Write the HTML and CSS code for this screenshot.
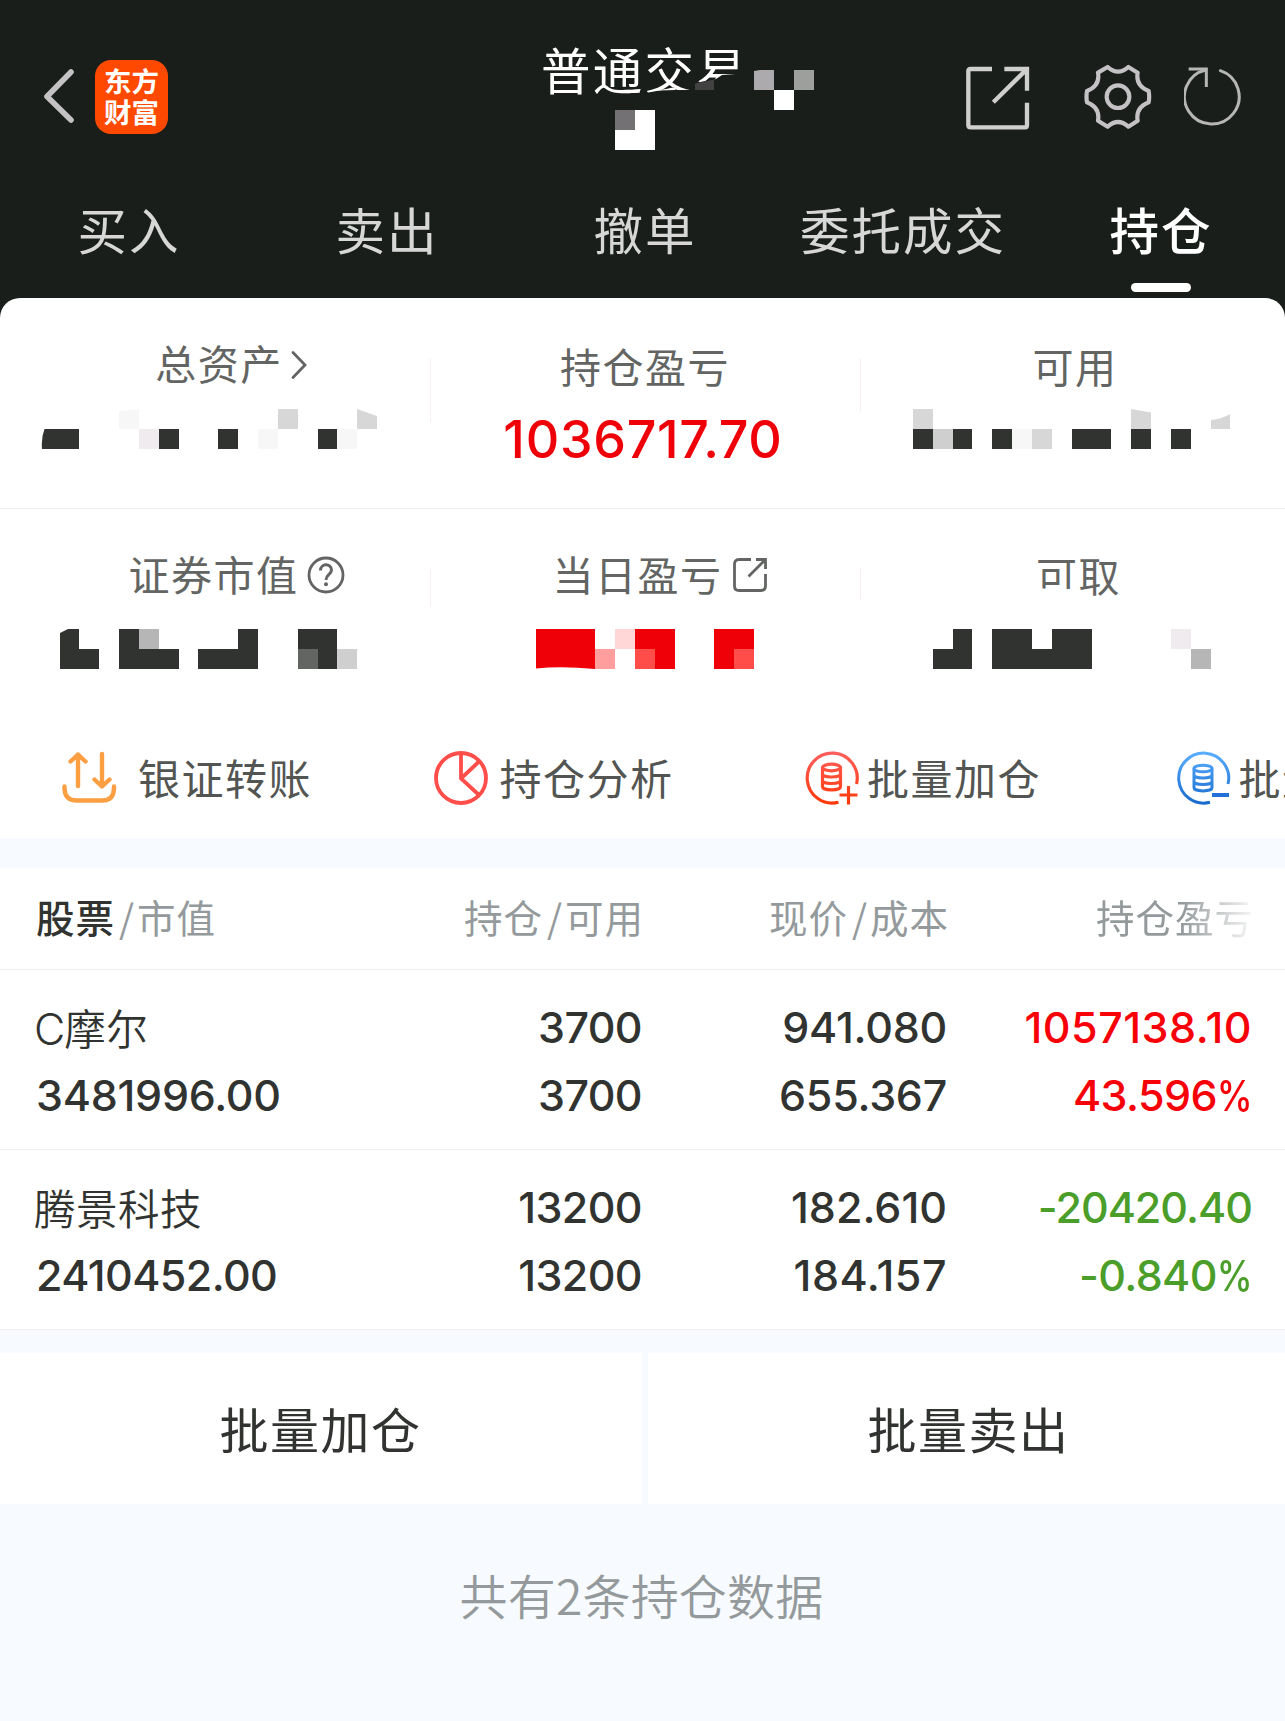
FILE: index.html
```html
<!DOCTYPE html>
<html lang="zh-CN">
<head>
<meta charset="utf-8">
<title>普通交易</title>
<link rel="stylesheet" href="styles.css">
</head>
<body>
<header class="header">
  <div class="topbar">
    <svg class="back" width="32" height="56" viewBox="0 0 32 56"><path d="M28 4 4 28.500 28 52" fill="none" stroke="#c5c2c5" stroke-width="5.600" stroke-linecap="round" stroke-linejoin="round"/></svg>
    <div class="logo">东方<br>财富</div>
    <h1 class="title">普通交易
      <svg class="title-mask" width="280" height="110" viewBox="540 45 280 110">
        <path d="M640 94 662 90 675 87V90H695L700 82 716 79 722 75 742 73.500 760 60V104H640Z" fill="#1a1e1a"/>
        <path d="M695 83.500 714 79.500V90H695Z" fill="#424142"/>
        <path d="M649 91.500Q668 89 679 86L675 90 660 90.500Z" fill="#fff"/>
        <path d="M754 71 760 70H774V90H754Z" fill="#adaaad"/>
        <path d="M794 70h20v20h-20z" fill="#9c9f9c"/>
        <path d="M774 90h20v20h-20zM615 110h40v40h-40z" fill="#fff"/>
        <path d="M615 110h20v20h-20z" fill="#737173"/>
      </svg>
    </h1>
    <div class="tools">
      <svg class="tool-share" width="64" height="64" viewBox="332 109 192 192"><path d="M410 118H346Q339 118 339 125V287Q339 293 346 293H509Q515 293 515 287V219M447 118H515V183M515 118 414 218" fill="none" stroke="#cecfce" stroke-width="13"/></svg>
      <svg class="tool-gear" width="68" height="66" viewBox="686 102 204 198"><g fill="none" stroke="#c5c2c5" stroke-width="12.500" stroke-linejoin="round"><path d="M757 111Q788 139 819 111L847 128Q840 168 880 183Q883 200 880 217Q840 232 847 272L819 290Q788 262 757 290L728 272Q735 232 695 217Q692 200 695 183Q735 168 728 128Z"/><circle cx="788" cy="200" r="34"/></g></svg>
      <svg class="tool-refresh" width="60" height="60" viewBox="982 111 180 180"><g fill="none" stroke="#b5b6b5" stroke-width="9"><path d="M1091 125A82 82 0 1 1 1047 123" stroke-linecap="round"/><path d="M996 120H1049V174"/></g></svg>
    </div>
  </div>
  <nav class="tabs">
    <a class="tab">买入</a><a class="tab">卖出</a><a class="tab">撤单</a><a class="tab">委托成交</a><a class="tab active">持仓</a>
  </nav>
</header>
<main>
  <section class="summary">
    <div class="summary-row">
      <div class="cell">
        <div class="label label-up">总资产<svg class="chev" width="18" height="30" viewBox="0 0 18 30"><path d="M3 2.500 15 15 3 27.500" fill="none" stroke="#636563" stroke-width="2.800" stroke-linecap="round"/></svg></div>
        <svg class="mosaic" width="430" height="40" viewBox="0 409 430 40">
          <path fill="#313330" d="M44.500 429H79V449H42Q41 438 44.500 429ZM159 429h20v20h-20zM218 429h20v20h-20zM318 429h19v20h-19z"/>
          <path fill="#f7f7f7" d="M119 411 139 409.500V429H119ZM258 429h20v20h-20zM337 429h20v20h-20z"/>
          <path fill="#efebef" d="M139 429h20v20h-20z"/>
          <path fill="#d6d7d6" d="M278 409h20v20h-20zM357 409 377 416V429H357Z"/>
        </svg>
      </div>
      <div class="cell rule rule-a">
        <div class="label">持仓盈亏</div>
        <div class="total">1036717.70</div>
      </div>
      <div class="cell rule rule-b">
        <div class="label label-avail">可用</div>
        <svg class="mosaic" width="425" height="40" viewBox="860 409 425 40">
          <path fill="#d6d7d6" d="M913 409h20v20h-20zM1032 429h20v20h-20zM1131 409 1151 412.500V429H1131ZM1211 420Q1222 419 1230 414V429H1211Z"/>
          <path fill="#cecfce" d="M933 429h20v20h-20z"/>
          <path fill="#f7f7f7" d="M1012 429h20v20h-20z"/>
          <path fill="#313330" d="M913 429h20v20h-20zM953 429h19v20h-19zM992 429h20v20h-20zM1072 429h39v20h-39zM1131 429h20v20h-20zM1171 429h20v20h-20z"/>
        </svg>
      </div>
    </div>
    <div class="summary-row second">
      <div class="cell">
        <div class="label">证券市值<svg class="help" width="38" height="38" viewBox="0 0 38 38"><g fill="none" stroke="#636563" stroke-width="2.800"><circle cx="19" cy="19" r="17"/><path d="M13.500 14.500C13.500 7 24.500 7 24.500 14C24.500 18.500 19 18.500 19 24" stroke-width="3"/></g><circle cx="19" cy="28.300" r="2" fill="#636563"/></svg></div>
        <svg class="mosaic" width="430" height="40" viewBox="0 629 430 40">
          <path fill="#313330" d="M60 633 68 629H79V649H99V669H60ZM119 629h20v20h40v20h-60zM198 649h40v-20h20v40h-60zM298 629h39v40h-19v-20h-20z"/>
          <path fill="#b5b6b5" d="M139 629h20v20h-20z"/><path fill="#636563" d="M298 649h20v20h-20z"/><path fill="#cecfce" d="M337 649h20v20h-20z"/>
        </svg>
      </div>
      <div class="cell rule rule-c">
        <div class="label">当日盈亏<svg class="share" width="36" height="36" viewBox="0 0 36 36"><path d="M19 2.500H7Q2.500 2.500 2.500 7V29Q2.500 33.500 7 33.500H29Q33.500 33.500 33.500 29V17M24 2.500H33.500V12M33 3 16.500 19.500" fill="none" stroke="#636563" stroke-width="2.800"/></svg></div>
        <svg class="mosaic" width="430" height="40" viewBox="430 629 430 40">
          <path fill="#ef0008" d="M536 629H595V669Q562 666 536 668.500ZM635 629h40v40h-40zM714 629h40v40h-40z"/>
          <path fill="#ff9e9c" d="M595 649h20v20h-20z"/><path fill="#ffd7d6" d="M615 629h20v20h-20z"/><path fill="#ff4d4a" d="M635 649h20v20h-20zM734 649h20v20h-20z"/>
        </svg>
      </div>
      <div class="cell rule rule-d">
        <div class="label label-draw"><span class="cut">可</span>取</div>
        <svg class="mosaic" width="425" height="40" viewBox="860 629 425 40">
          <path fill="#313330" d="M953 629h19v40h-39v-20h20zM992 629h40v20h20v-20h40v40h-100z"/>
          <path fill="#efebef" d="M1171 629h20v20h-20z"/><path fill="#b5b6b5" d="M1191 649h20v20h-20z"/>
        </svg>
      </div>
    </div>
    <div class="actions">
      <a class="action action-transfer"><svg width="56" height="56" viewBox="61 750 56 56"><path d="M64.500 786.500V788Q64.500 800.500 77 800.500H102Q114 800.500 114 788V786.500M78 786V754.500M70.500 761.500 78 754.500 85.500 761.500M102 754V786M94.500 779.500 102 786.500 109.500 779.500" fill="none" stroke="#fb9f42" stroke-width="4.400" stroke-linecap="round" stroke-linejoin="round"/></svg><span>银证转账</span></a>
      <a class="action action-analysis"><svg width="56" height="56" viewBox="433 750 56 56"><path d="M461 753V778.500L479 795M461 778.500 479 761.500" fill="none" stroke="#ff4d4a" stroke-width="3.800"/><circle cx="461" cy="778" r="25" fill="none" stroke="#ff4d4a" stroke-width="3.800"/></svg><span>持仓分析</span></a>
      <a class="action action-batch"><svg width="56" height="56" viewBox="804.500 750 56 56"><defs><linearGradient id="red" gradientUnits="userSpaceOnUse" x1="0" y1="752" x2="0" y2="804"><stop offset="0" stop-color="#ff5f5c"/><stop offset="1" stop-color="#ff3808"/></linearGradient></defs><g fill="none" stroke="url(#red)" stroke-width="3.200"><path d="M839 802.300A25 25 0 1 1 857 784"/><ellipse cx="832" cy="767.500" rx="9" ry="3.300"/><path d="M823 767.500V786.500C823 791 841 791 841 786.500V767.500M823 774C823 778 841 778 841 774M823 780.500C823 784.500 841 784.500 841 780.500M840 795H858M849 786V804.500"/></g></svg><span>批量加仓</span></a>
      <a class="action action-batch"><svg width="56" height="56" viewBox="805 750 56 56"><defs><linearGradient id="blue" gradientUnits="userSpaceOnUse" x1="0" y1="752" x2="0" y2="804"><stop offset="0" stop-color="#5aaeff"/><stop offset="1" stop-color="#186bce"/></linearGradient></defs><g fill="none" stroke="url(#blue)" stroke-width="3"><path d="M839 802.300A25 25 0 1 1 857 784"/><ellipse cx="832" cy="768.500" rx="9" ry="3.300"/><path d="M823 768.500V787.500C823 792 841 792 841 787.500V768.500M823 775C823 779 841 779 841 775M823 781.500C823 785.500 841 785.500 841 781.500"/></g><path d="M841 793h17v4h-17z" fill="#2171d6"/></svg><span>批量减仓</span></a>
    </div>
  </section>

  <section class="holdings">
    <div class="row head">
      <div><b>股票</b><i>/</i>市值</div>
      <div class="num">持仓<i>/</i>可用</div>
      <div class="num">现价<i>/</i>成本</div>
      <div class="num fade">持仓盈亏</div>
    </div>
    <div class="row stock">
      <div><p class="name"><span class="latin">C</span>摩尔</p><p class="snug">3481996.00</p></div>
      <div class="num tight"><p>3700</p><p>3700</p></div>
      <div class="num snug"><p>941.080</p><p>655.367</p></div>
      <div class="num up"><p class="loose">1057138.10</p><p class="tight">43.596<span class="pct">%</span></p></div>
    </div>
    <div class="row stock">
      <div><p class="name">腾景科技</p><p class="tight">2410452.00</p></div>
      <div class="num tight"><p>13200</p><p>13200</p></div>
      <div class="num"><p>182.610</p><p class="loose">184.157</p></div>
      <div class="num down"><p class="tightest">-20420.40</p><p class="tight">-0.840<span class="pct">%</span></p></div>
    </div>
  </section>

  <section class="batch">
    <a>批量加仓</a><a>批量卖出</a>
  </section>
  <p class="count">共有2条持仓数据</p>
</main>
</body>
</html>
```
FILE: styles.css
```css
* { box-sizing: border-box; }
body {
  margin: 0;
  width: 1285px;
  height: 1721px;
  overflow: hidden;
  background: #f7fbff;
  font-family: "Noto Sans CJK SC", sans-serif;
  color: #313330;
}
p, h1 { margin: 0; }
i { font-style: normal; }
svg { display: block; flex: none; }

.header { height: 318px; background: #1a1e1a; overflow: hidden; }
.topbar { display: flex; align-items: flex-start; height: 190px; }
.back { margin: 68px 0 0 43px; }
.logo {
  width: 73px; height: 74px; margin: 60px 0 0 20px; padding-top: 5px;
  border-radius: 16px; background: #ff4900; color: #fff; text-align: center;
  font-size: 27.500px; font-weight: 700; line-height: 31px;
}
.title {
  position: relative; width: 210px; margin: 34px 0 0 373px;
  color: #fff; font-size: 49.500px; font-weight: 400; line-height: 70px;
  letter-spacing: 2.300px; white-space: nowrap;
}
.title-mask { position: absolute; left: -1px; top: 11px; }
.tools { display: flex; margin-left: 215px; }
.tool-share { margin-top: 66px; }
.tool-gear { margin: 64px 0 0 54px; }
.tool-refresh { margin: 66px 0 0 32px; }

.tabs { display: grid; grid-template-columns: repeat(5, 258px); }
.tab {
  display: flex; flex-direction: column; align-items: center;
  height: 108px; padding-top: 1px; color: #d6d7d6;
  font-size: 49.500px; line-height: 76px; letter-spacing: 2px;
}
.active { color: #fff; font-weight: 500; }
.active::after {
  content: ""; width: 60px; height: 9px; margin: 16px 0 0 0;
  border-radius: 4.500px; background: #fff;
}

.summary {
  height: 540px; margin-top: -20px; overflow: hidden;
  border-radius: 20px 20px 0 0; background: #fff;
}
.summary-row { display: grid; grid-template-columns: 430px 430px 425px; height: 210px; padding-top: 42px; }
.second { border-top: 1px solid #f3eced; }
.cell { position: relative; }
.label {
  display: flex; justify-content: center; align-items: center;
  height: 50px; color: #636563;
  font-size: 41px; line-height: 50px; letter-spacing: 1.500px;
}
.rule::before { content: ""; position: absolute; left: 0; top: 18px; width: 1px; background: #f7eff0; }
.rule-a::before { height: 64px; }
.rule-b::before { height: 54px; }
.rule-c::before { height: 38px; }
.rule-d::before { height: 30px; }
.label-up { height: 44px; padding-left: 33px; }
.label-up + .mosaic { margin-top: 25px; }
.label-up .chev { margin-top: 5px; }
.label-avail { padding-left: 5px; }
.cut { clip-path: inset(0 0 10px 0); }
.chev { margin-left: 7px; }
.help { margin: 4px 0 0 8px; }
.share { margin: 4px 0 0 9px; }
.second .label { margin-top: -3px; }
.second .cell:first-child .label { padding-left: 43px; }
.second .rule-c .label { padding-left: 30px; }
.second .label-draw { padding: 2px 0 0 12px; }
.mosaic { margin-top: 19px; }
.second .mosaic { margin-top: 31px; }
.total {
  margin: 20px 0 0 -4px; text-align: center; color: #ef0008;
  font-family: Inter, sans-serif; font-size: 52px; font-weight: 550; line-height: 60px; letter-spacing: 0.700px;
}

.actions { display: flex; height: 120px; padding: 32px 0 0 61px; }
.action {
  display: flex; flex: none; width: 371.500px; height: 56px;
  color: #525552; font-size: 42px; line-height: 53px; letter-spacing: 1.500px;
}
.action-transfer span { margin-left: 21px; }
.action-analysis span { margin-left: 11px; }
.action-batch span { margin-left: 7px; }

.holdings { margin-top: 30px; background: #fff; }
.row {
  display: grid; grid-template-columns: 301px 305px 305px 305px;
  padding-left: 36px; border-bottom: 1px solid #f1edef;
}
.num { text-align: right; }
.head { height: 102px; padding-top: 21px; color: #949a9c; font-size: 38.500px; font-weight: 400; line-height: 54px; letter-spacing: 1px; }
.head .num { margin-right: -2px; }
.head b { color: #313330; font-weight: 500; }
.head i { margin: 0 2px 0 4px; }
.fade { -webkit-mask-image: linear-gradient(90deg, #000 235px, transparent 312px); mask-image: linear-gradient(90deg, #000 235px, transparent 312px); }
.stock { height: 180px; padding-top: 23px; font-family: Inter, sans-serif; font-size: 43px; font-weight: 550; line-height: 68px; }
.stock p { height: 68px; white-space: nowrap; }
.stock .name { font-family: "Noto Sans CJK SC", sans-serif; font-size: 41.500px; font-weight: 350; margin-left: -2px; letter-spacing: 0.500px; }
.latin { font-family: Inter, sans-serif; font-size: 43px; font-weight: 300; letter-spacing: -1px; }
.loose { letter-spacing: 0.500px; }
.snug { letter-spacing: -0.250px; }
.tight { letter-spacing: -0.600px; }
.tightest { letter-spacing: -1px; }
.pct { display: inline-block; transform: scaleX(0.840); transform-origin: right; margin-left: -7px; }
.up { color: #f70008; }
.down { color: #4a9e29; }

.batch { display: grid; grid-template-columns: 642px 637px; gap: 6px; margin-top: 23px; }
.batch a { height: 151px; padding-top: 37px; background: #fff; text-align: center; font-size: 49px; line-height: 76px; letter-spacing: 1.500px; }
.batch a:first-child { padding-right: 1px; }
.batch a:last-child { padding-left: 4px; }
.count { margin: 55px 2px 0 0; text-align: center; color: #949a9c; font-size: 48px; font-weight: 350; line-height: 70px; letter-spacing: 0.200px; }
```
